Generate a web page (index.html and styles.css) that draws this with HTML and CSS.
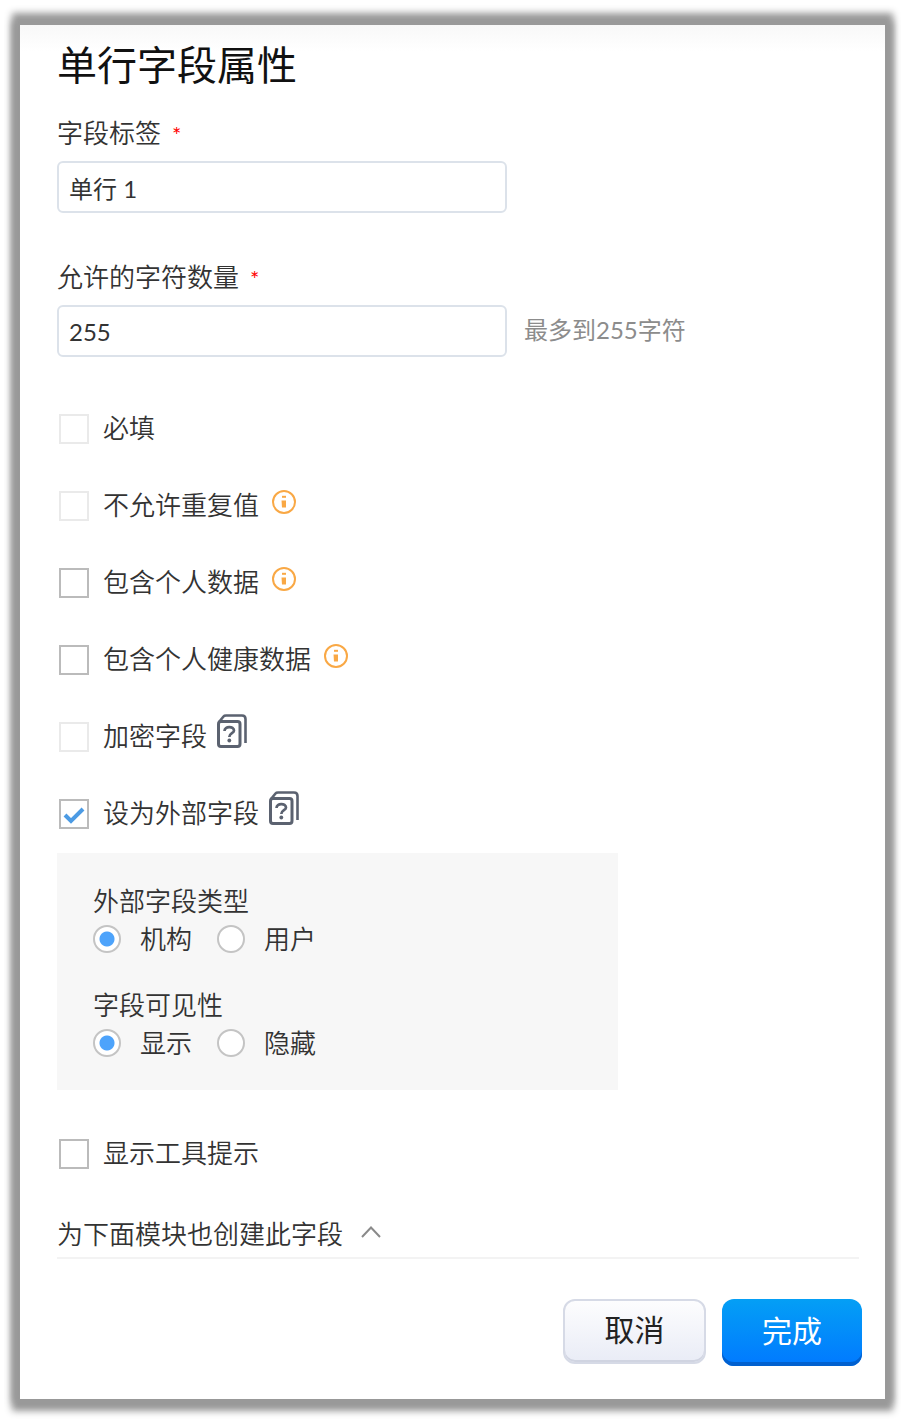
FILE: index.html
```html
<!DOCTYPE html>
<html lang="zh-CN">
<head>
    <meta charset="UTF-8">
    <meta name="viewport" content="width=device-width, initial-scale=1.0">
    <title>单行字段属性</title>
    <link rel="stylesheet" href="styles.css">
</head>
<body>

    <!-- shared icons -->
    <svg class="sprite" aria-hidden="true">
        <symbol id="icon-info" viewBox="0 0 26 26">
            <circle cx="13" cy="13" r="11" fill="none" stroke="#f9a845" stroke-width="2"/>
            <path d="M11 7.800h4" stroke="#f9a845" stroke-width="2"/>
            <path d="M10.500 11.500h4.500v7h-4z" fill="#f9a845"/>
        </symbol>
        <symbol id="icon-help" viewBox="0 0 30 34">
            <rect x="1.500" y="7.500" width="21.500" height="25" rx="2.500" fill="none" stroke="#5b6270" stroke-width="3"/>
            <path d="M2 8L6.500 2.500Q7.300 1.500 9 1.500H25Q28.500 1.500 28.500 5V29" fill="none" stroke="#5b6270" stroke-width="2.600"/>
            <path d="M7.500 17C7.500 11.800 17 11.800 17 16.500C17 19.300 12.300 19.200 12.300 23" fill="none" stroke="#5b6270" stroke-width="2.700"/>
            <circle cx="12.300" cy="26.500" r="1.900" fill="#5b6270"/>
        </symbol>
    </svg>

    <form class="panel">
        <h1>单行字段属性</h1>

        <div class="field">
            <label for="field-label">字段标签 <span class="required">*</span></label>
            <div class="input-row">
                <input type="text" id="field-label" value="单行 1">
            </div>
        </div>

        <div class="field">
            <label for="char-count">允许的字符数量 <span class="required">*</span></label>
            <div class="input-row">
                <input type="text" id="char-count" value="255">
                <span class="hint">最多到255字符</span>
            </div>
        </div>

        <div class="options">
            <div class="option">
                <input type="checkbox" id="is-required" disabled>
                <label for="is-required">必填</label>
            </div>
            <div class="option">
                <input type="checkbox" id="no-duplicate" disabled>
                <label for="no-duplicate">不允许重复值</label>
                <svg class="info"><use href="#icon-info"/></svg>
            </div>
            <div class="option">
                <input type="checkbox" id="personal-data">
                <label for="personal-data">包含个人数据</label>
                <svg class="info"><use href="#icon-info"/></svg>
            </div>
            <div class="option">
                <input type="checkbox" id="health-data">
                <label for="health-data">包含个人健康数据</label>
                <svg class="info"><use href="#icon-info"/></svg>
            </div>
            <div class="option">
                <input type="checkbox" id="encrypt" disabled>
                <label for="encrypt">加密字段</label>
                <svg class="help"><use href="#icon-help"/></svg>
            </div>
            <div class="option">
                <input type="checkbox" id="external" checked>
                <label for="external">设为外部字段</label>
                <svg class="help"><use href="#icon-help"/></svg>
            </div>
        </div>

        <!-- external field settings -->
        <div class="external-box">
            <fieldset>
                <legend>外部字段类型</legend>
                <div class="radio-row">
                    <input type="radio" name="external-type" id="type-org" checked>
                    <label for="type-org">机构</label>
                    <input type="radio" name="external-type" id="type-user">
                    <label for="type-user">用户</label>
                </div>
            </fieldset>
            <fieldset>
                <legend>字段可见性</legend>
                <div class="radio-row">
                    <input type="radio" name="visibility" id="visible" checked>
                    <label for="visible">显示</label>
                    <input type="radio" name="visibility" id="hidden">
                    <label for="hidden">隐藏</label>
                </div>
            </fieldset>
        </div>

        <div class="option">
            <input type="checkbox" id="tooltip">
            <label for="tooltip">显示工具提示</label>
        </div>

        <div class="modules">
            <button type="button" class="toggle">
                为下面模块也创建此字段
                <svg class="chevron" viewBox="0 0 20 12"><path d="M1 11L10 1.500L19 11" fill="none" stroke="#8a8a8a" stroke-width="2"/></svg>
            </button>
        </div>

        <div class="actions">
            <button type="button" class="btn cancel">取消</button>
            <button type="submit" class="btn done">完成</button>
        </div>
    </form>

</body>
</html>
```
FILE: styles.css
```css
* {
    box-sizing: border-box;
}

body {
    margin: 0;
    padding: 25px 20px;
    background-color: white;
    color: #333;
    font-family: Lato, "Noto Sans CJK SC", sans-serif;
    font-size: 26px;
    font-weight: 350;
}

.sprite {
    display: none;
}

.panel {
    padding: 10px 23px 33px 37px;
    background: linear-gradient(#f8f8f8, white 26px);
    box-shadow: 0 -4px 7px 8px #999, 0 4px 7px 8px #999;
}

h1 {
    margin: 0 0 18px;
    color: #111;
    font-size: 40px;
    font-weight: 400;
    line-height: 60px;
}

input,
button {
    margin: 0;
    color: inherit;
    font-family: inherit;
    font-weight: inherit;
}

/* text fields */
.field {
    margin-bottom: 44px;
}

.field label {
    display: block;
    height: 40px;
    line-height: 40px;
}

.required {
    margin-left: 4px;
    color: red;
    font-size: 22px;
    font-weight: 400;
}

.input-row {
    display: flex;
    align-items: center;
    gap: 17px;
    margin-top: 8px;
    font-weight: 400;
}

.input-row input {
    width: 450px;
    max-width: 100%;
    height: 52px;
    padding: 0 10px;
    border: 2px solid #dce2ea;
    border-radius: 6px;
    background-color: white;
    font-size: 24px;
}

.hint {
    padding-bottom: 6px;
    color: #8c8c8c;
    font-size: 24px;
}

/* check boxes */
.options {
    display: grid;
    gap: 43px;
    margin-top: 55px;
}

.option {
    display: flex;
    align-items: center;
    height: 34px;
}

.option label {
    margin-left: 14px;
    padding-bottom: 6px;
}

input[type="checkbox"] {
    appearance: none;
    width: 30px;
    height: 30px;
    margin-left: 2px;
    border: 2px solid #bbb;
    background-color: white;
}

input[type="checkbox"]:disabled {
    border-color: #eaeaea;
}

input[type="checkbox"]:checked {
    background: url("data:image/svg+xml,%3Csvg xmlns='http://www.w3.org/2000/svg' viewBox='0 0 26 26'%3E%3Cpath d='M4 14L10 20L22 8' fill='none' stroke='%234c9be4' stroke-width='4'/%3E%3C/svg%3E") center / 26px 26px no-repeat;
}

.info {
    width: 26px;
    height: 26px;
    margin: 0 0 8px 12px;
}

.help {
    width: 30px;
    height: 34px;
    margin: 0 0 12px 10px;
}

/* external field box */
.external-box {
    width: 561px;
    max-width: 100%;
    margin: 22px 0 47px;
    padding: 28px 36px 29px;
    background-color: #f7f7f7;
}

fieldset {
    margin: 0;
    padding: 0;
    border: 0;
}

fieldset + fieldset {
    margin-top: 28px;
}

legend {
    padding: 0;
    line-height: 40px;
}

.radio-row {
    display: flex;
    align-items: center;
    height: 36px;
}

.radio-row label {
    margin: 0 25px 0 19px;
    padding-bottom: 3px;
}

input[type="radio"] {
    appearance: none;
    width: 28px;
    height: 28px;
    border: 2px solid #c4c4c4;
    border-radius: 50%;
    background-color: white;
}

input[type="radio"]:checked {
    background: radial-gradient(circle, #4da3fb 7px, white 8px);
}

/* module list and buttons */
.modules {
    margin: 40px 3px 0 0;
    border-bottom: 2px solid #f3f3f3;
}

.toggle {
    display: flex;
    align-items: center;
    gap: 18px;
    height: 46px;
    padding: 0 0 4px;
    border: 0;
    background: none;
    font-size: 26px;
}

.chevron {
    width: 20px;
    height: 12px;
}

.actions {
    display: flex;
    justify-content: flex-end;
    gap: 16px;
    margin-top: 40px;
}

.btn {
    width: 140px;
    height: 67px;
    padding: 0 0 8px;
    border: 0;
    border-radius: 12px;
    font-size: 30px;
    font-weight: 400;
}

.cancel {
    width: 143px;
    height: 65px;
    border: 2px solid #d6dae6;
    background: linear-gradient(#fdfdfe, #e9ecf6);
    box-shadow: inset 0 -2px 0 #d0d4e1;
    color: #222;
}

.done {
    background: linear-gradient(#049ff5, #0179ff);
    box-shadow: inset 0 -4px 0 #0160cf;
    color: white;
}
```
